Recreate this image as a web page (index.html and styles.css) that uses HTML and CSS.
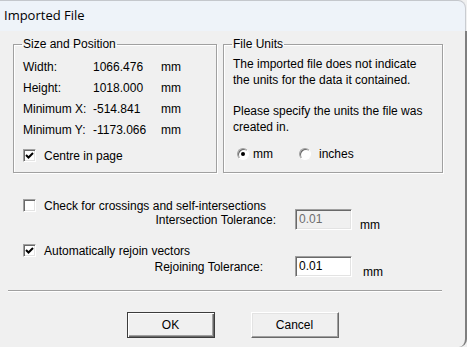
FILE: index.html
```html
<!DOCTYPE html>
<html lang="en">
<head>
  <meta charset="UTF-8">
  <title>Imported File</title>
  <link rel="stylesheet" href="styles.css">
</head>
<body>
  <div class="window">
    <div class="titlebar">Imported File</div>

    <div class="content">
      <div class="groups">
        <fieldset class="group size-group">
          <legend>Size and Position</legend>
          <div class="dims">
            <span>Width:</span><span>1066.476</span><span>mm</span>
            <span>Height:</span><span>1018.000</span><span>mm</span>
            <span>Minimum X:</span><span>-514.841</span><span>mm</span>
            <span>Minimum Y:</span><span>-1173.066</span><span>mm</span>
          </div>
          <label class="check centre-check">
            <span class="box checked"><svg viewBox="0 0 11 11" width="11" height="11"><path d="M2 5 L4.5 7.5 L9 3" fill="none" stroke="#000" stroke-width="2"/></svg></span>
            Centre in page
          </label>
        </fieldset>

        <fieldset class="group units-group">
          <legend>File Units</legend>
          <p>The imported file does not indicate<br>the units for the data it contained.</p>
          <p class="second">Please specify the units the file was<br>created in.</p>
          <div class="radios">
            <label class="radio"><span class="dot on"></span>mm</label>
            <label class="radio inches"><span class="dot"></span>inches</label>
          </div>
        </fieldset>
      </div>

      <div class="options">
        <label class="check">
          <span class="box"></span>
          Check for crossings and self-intersections
        </label>
        <div class="tol-row first-tol">
          <span class="tol-label">Intersection Tolerance:</span>
          <span class="field disabled">0.01</span>
          <span class="unit">mm</span>
        </div>
        <label class="check rejoin-check">
          <span class="box checked"><svg viewBox="0 0 11 11" width="11" height="11"><path d="M2 5 L4.5 7.5 L9 3" fill="none" stroke="#000" stroke-width="2"/></svg></span>
          Automatically rejoin vectors
        </label>
        <div class="tol-row second-tol">
          <span class="tol-label">Rejoining Tolerance:</span>
          <span class="field">0.01</span>
          <span class="unit">mm</span>
        </div>
      </div>

      <div class="separator"></div>

      <div class="buttons">
        <button class="btn default">OK</button>
        <button class="btn">Cancel</button>
      </div>
    </div>
  </div>
</body>
</html>
```

FILE: styles.css
```css
body {
  margin: 0;
  background-color: #f0f0f0;
  font-family: 'Liberation Sans', Arial, sans-serif;
  font-size: 12px;
  color: #000;
}

.window { width: 467px; height: 347px; }

.titlebar {
  box-sizing: border-box;
  height: 31px;
  width: 466px;
  background-color: #eef3f9;
  border-top: 1px solid #c4c7cc;
  border-right: 1px solid #c9ccd1;
  border-top-right-radius: 8px;
  font-family: 'Open Sans', sans-serif;
  font-size: 13px;
  line-height: 29px;
  padding-left: 4px;
}

.content {
  box-sizing: border-box;
  height: 316px;
  width: 467px;
  background-color: #f0f0f0;
  border-right: 2px solid #7f7f7f;
  border-bottom-right-radius: 8px;
  padding-top: 6px;
}

/* Group boxes */
.groups { display: flex; gap: 6px; padding-left: 13px; }
.group {
  box-sizing: border-box;
  margin: 0;
  height: 136px;
  padding: 5px 9px 0 9px;
  border: 1px solid #a0a0a0;
  box-shadow: inset 1px 1px #fff, 1px 1px #fff;
}
.group legend { padding: 0 1px; margin-left: -1px; line-height: 14px; }
.size-group { width: 204px; }
.units-group { width: 220px; }

.dims {
  display: grid;
  grid-template-columns: 70px 68px auto;
  grid-auto-rows: 21px;
  align-items: center;
}

.check { display: flex; align-items: center; gap: 8px; height: 13px; }
.centre-check { margin-top: 9px; }

.box {
  box-sizing: border-box;
  width: 13px;
  height: 13px;
  background: #fff;
  border: 1px solid;
  border-color: #a0a0a0 #fff #fff #a0a0a0;
  box-shadow: inset 1px 1px #696969, inset -1px -1px #e3e3e3;
  display: flex;
  align-items: center;
  justify-content: center;
}
.box svg { display: block; }

.units-group p { margin: 0; line-height: 16px; }
.units-group .second { margin-top: 15px; }

.radios { display: flex; margin-top: 12px; height: 13px; align-items: center; padding-left: 4px; }
.radio { display: flex; align-items: center; gap: 4px; width: 62px; }
.radio.inches { gap: 8px; }
.dot {
  box-sizing: border-box;
  width: 12px;
  height: 12px;
  border-radius: 50%;
  background: #fff;
  border: 1px solid;
  border-color: #a0a0a0 #fff #fff #a0a0a0;
  box-shadow: inset 1px 1px #696969;
  position: relative;
}
.dot.on::after {
  content: '';
  position: absolute;
  left: 3px;
  top: 3px;
  width: 4px;
  height: 4px;
  border-radius: 50%;
  background: #000;
}

/* Lower options */
.options { padding-left: 23px; margin-top: 26px; }
.tol-row { display: flex; align-items: center; height: 21px; }
.first-tol { margin-top: -3px; }
.second-tol { margin-top: -1px; }
.rejoin-check { margin-top: 14px; }
.tol-label { width: 253px; text-align: right; margin-right: 19px; }
.second-tol .tol-label { width: 240px; margin-right: 32px; }

.field {
  box-sizing: border-box;
  width: 57px;
  height: 21px;
  background: #fff;
  border: 1px solid;
  border-color: #a0a0a0 #fff #fff #a0a0a0;
  box-shadow: inset 1px 1px #696969, inset -1px -1px #e3e3e3;
  padding: 2px 0 0 3px;
  line-height: 14px;
}
.field.disabled { background: #f0f0f0; color: #6d6d6d; }
.unit { margin-left: 8px; align-self: flex-end; margin-bottom: -2px; }
.second-tol .unit { margin-left: 11px; }

.separator {
  margin: 13px 0 0 8px;
  width: 434px;
  height: 1px;
  background: #a0a0a0;
  border-bottom: 1px solid #fff;
}

.buttons { display: flex; justify-content: center; gap: 36px; margin-top: 20px; }
.btn {
  box-sizing: border-box;
  width: 88px;
  height: 26px;
  background: #f0f0f0;
  font-family: 'Liberation Sans', Arial, sans-serif;
  font-size: 12px;
  color: #000;
  border: 1px solid;
  border-color: #fff #696969 #696969 #fff;
  box-shadow: inset -1px -1px #a0a0a0, inset 1px 1px #e3e3e3;
  padding: 0;
}
.btn.default {
  border: 1px solid #3c3c3c;
  box-shadow: inset 1px 1px #fff, inset -1px -1px #696969, inset -2px -2px #a0a0a0;
}
```
